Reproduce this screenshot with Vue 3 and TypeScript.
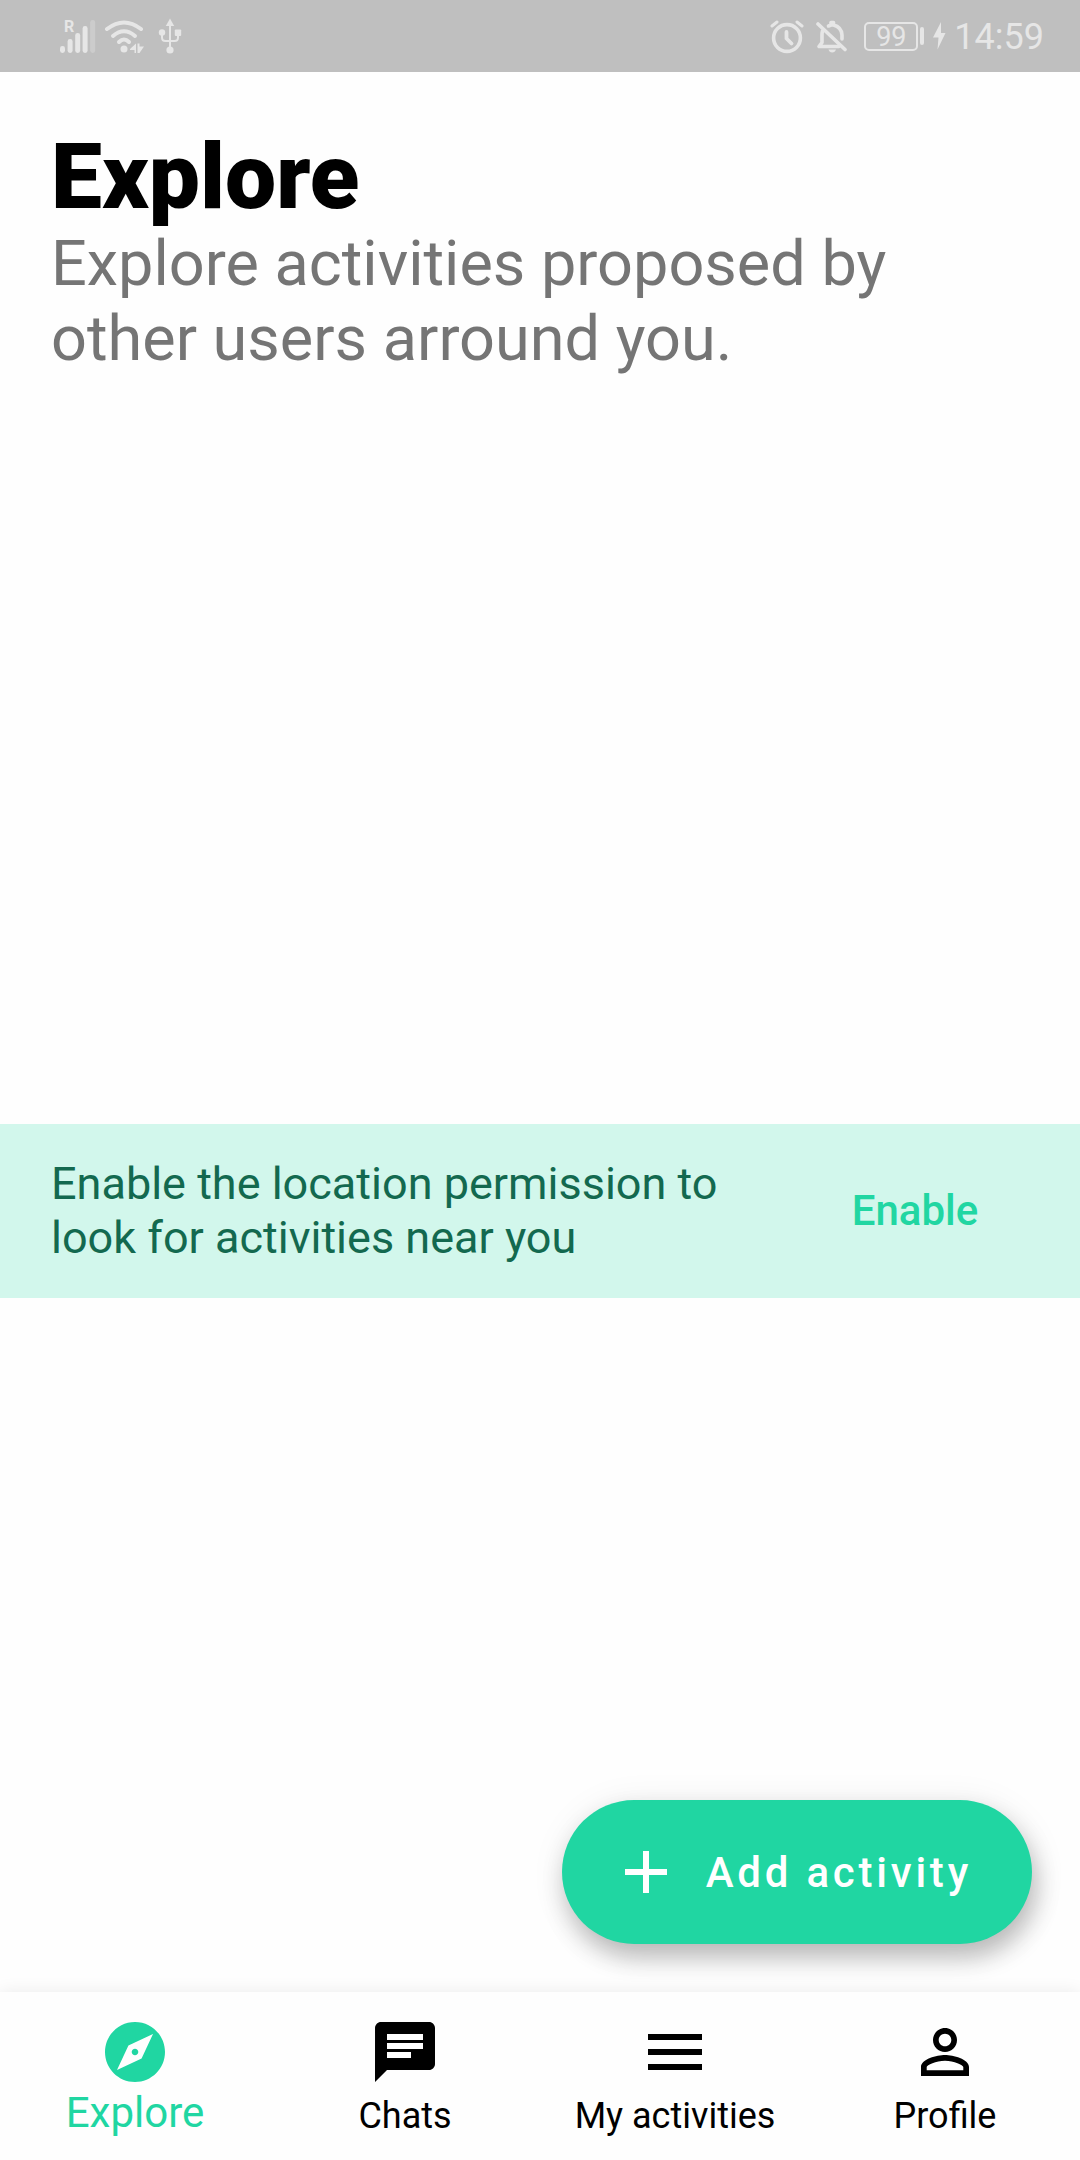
<script setup lang="ts">
import { ref } from 'vue'

interface Tab {
  id: string
  label: string
  path: string
}

const tabs: Tab[] = [
  {
    id: 'explore',
    label: 'Explore',
    path: 'M12 10.9c-.61 0-1.1.49-1.1 1.1s.49 1.1 1.1 1.1c.61 0 1.1-.49 1.1-1.1s-.49-1.1-1.1-1.1zM12 2C6.48 2 2 6.48 2 12s4.48 10 10 10 10-4.48 10-10S17.52 2 12 2zm2.19 12.19L6 18l3.81-8.19L18 6l-3.81 8.19z',
  },
  {
    id: 'chats',
    label: 'Chats',
    path: 'M20 2H4c-1.1 0-1.99.9-1.99 2L2 22l4-4h14c1.1 0 2-.9 2-2V4c0-1.1-.9-2-2-2zM6 9h12v2H6V9zm8 5H6v-2h8v2zm4-6H6V6h12v2z',
  },
  {
    id: 'activities',
    label: 'My activities',
    path: 'M3 18h18v-2H3v2zm0-5h18v-2H3v2zm0-7v2h18V6H3z',
  },
  {
    id: 'profile',
    label: 'Profile',
    path: 'M12 5.9c1.16 0 2.1.94 2.1 2.1s-.94 2.1-2.1 2.1S9.9 9.16 9.9 8s.94-2.1 2.1-2.1m0 9c2.97 0 6.1 1.46 6.1 2.1v1.1H5.9V17c0-.64 3.13-2.1 6.1-2.1M12 4C9.79 4 8 5.79 8 8s1.79 4 4 4 4-1.79 4-4-1.79-4-4-4zm0 9c-2.67 0-8 1.34-8 4v3h16v-3c0-2.66-5.33-4-8-4z',
  },
]

const active = ref('explore')
</script>

<template>
  <div class="screen">
    <div class="status">
      <div class="status-left">
        <svg class="signal" width="38" height="36" viewBox="0 0 38 36" aria-hidden="true">
          <text x="4" y="14" class="roaming">R</text>
          <rect x="0" y="28" width="5" height="7" rx="2.4" />
          <rect x="7.6" y="21" width="5" height="14" rx="2.4" />
          <rect x="15.2" y="15" width="5" height="20" rx="2.4" />
          <rect x="22.6" y="8" width="5" height="27" rx="2.4" />
          <rect x="30.2" y="2" width="5" height="33" rx="2.4" opacity=".35" />
        </svg>
        <svg width="42" height="36" viewBox="0 0 42 36" aria-hidden="true">
          <g fill="none" stroke="currentColor" stroke-width="4" stroke-linecap="round">
            <path d="M3 11Q20 -2 37 11" />
            <path d="M9 18Q20 8.500 31 18" />
            <path d="M15 24Q20 19 25 24" />
          </g>
          <circle cx="20" cy="31" r="3.500" />
          <path d="M26 31L32 25.500V35H30.500V32H26zM33.500 25.500H35.500V28.500H40L35.500 35H33.500z" />
        </svg>
        <svg class="usb" width="24" height="36" viewBox="0 0 24 36" aria-hidden="true">
          <path d="M12 .5L16.200 8H7.800z" />
          <path d="M12 7V31M4 14V19.500Q4 23 7.500 23H16.500Q20 23 20 19.500V14" fill="none" stroke="currentColor" stroke-width="2" />
          <circle cx="4" cy="14.500" r="3.200" />
          <rect x="16.800" y="11.500" width="6.400" height="6.400" rx="1" />
          <circle cx="12" cy="32" r="3.600" />
        </svg>
      </div>
      <div class="status-right">
        <svg width="34" height="36" viewBox="0 0 34 36" aria-hidden="true">
          <g fill="none" stroke="currentColor" stroke-linecap="round" stroke-linejoin="round">
            <circle cx="17" cy="20" r="13.400" stroke-width="3.600" />
            <path d="M16.500 14V20.500L21.500 25.500" stroke-width="3.800" />
            <path d="M2 8L7 4M27 4L32 8" stroke-width="3" />
          </g>
        </svg>
        <svg class="bell" width="32" height="36" viewBox="0 0 32 36" aria-hidden="true">
          <g fill="none" stroke="currentColor" stroke-width="3.600" stroke-linecap="round" stroke-linejoin="round">
            <path d="M6.500 13Q6 15 6 17V24.500L3 28.500H23" />
            <path d="M12.500 8L15 7V4.500H17.500V7Q25.500 9 26 17V21" />
            <path d="M2 6L29 31.500" />
          </g>
          <path d="M12.500 31.500H20Q19 34.500 16.200 34.500T12.500 31.500z" />
        </svg>
        <span class="battery">99</span>
        <span class="battery-tip"></span>
        <svg class="bolt" width="14" height="28" viewBox="0 0 14 28" aria-hidden="true">
          <path d="M9 0L1 15.500H6.500L5.500 27.500L13.500 11H9z" />
        </svg>
        <time>14:59</time>
      </div>
    </div>

    <header class="intro">
      <h1>Explore</h1>
      <p>Explore activities proposed by other users arround you.</p>
    </header>

    <main class="content">
      <section class="banner">
        <p>Enable the location permission to look for activities near you</p>
        <div class="banner-action">
          <button type="button" class="enable">Enable</button>
        </div>
      </section>
      <button type="button" class="fab">
        <svg width="72" height="72" viewBox="0 0 24 24" aria-hidden="true">
          <path d="M19 13h-6v6h-2v-6H5v-2h6V5h2v6h6v2z" />
        </svg>
        <span>Add activity</span>
      </button>
    </main>

    <nav class="tabs">
      <button
        v-for="tab in tabs"
        :key="tab.id"
        type="button"
        class="tab"
        :class="{ active: tab.id === active }"
        @click="active = tab.id"
      >
        <svg width="72" height="72" viewBox="0 0 24 24" aria-hidden="true">
          <path :d="tab.path" />
        </svg>
        <span>{{ tab.label }}</span>
      </button>
    </nav>
  </div>
</template>

<style>
body {
  margin: 0;
  background: #fefefe;
}
</style>

<style scoped>
.screen {
  display: flex;
  flex-direction: column;
  min-height: 100vh;
  background: #fefefe;
  color: #000;
  font-family: Roboto, sans-serif;
}

svg {
  display: block;
  flex: none;
  fill: currentColor;
}

h1,
p {
  margin: 0;
}

button {
  padding: 0;
  border: 0;
  background: none;
  color: inherit;
  font: inherit;
  cursor: pointer;
}

.status {
  display: flex;
  justify-content: space-between;
  align-items: center;
  height: 72px;
  padding: 0 36px 0 60px;
  background: #bfbfbf;
  color: #e6e6e6;
}

.status-left,
.status-right {
  display: flex;
  align-items: center;
}

.signal {
  margin-right: 6px;
}

.usb {
  margin-left: 12px;
}

.roaming {
  font-size: 16px;
  font-weight: 700;
}

.bell {
  margin: 0 16px 0 12px;
}

.battery {
  box-sizing: border-box;
  width: 54px;
  height: 29px;
  border: 2px solid currentColor;
  border-radius: 5px;
  font-size: 27px;
  line-height: 26px;
  text-align: center;
}

.battery-tip {
  width: 4px;
  height: 18px;
  margin: 0 8px 0 2px;
  border-radius: 2px;
  background: currentColor;
}

.bolt {
  margin-right: 8px;
}

time {
  font-size: 36px;
  line-height: 42px;
  padding-top: 2px;
}

.intro {
  padding: 56px 51px 53px;
}

h1 {
  font-size: 91px;
  font-weight: 900;
  line-height: 98px;
}

.intro p {
  color: #757575;
  font-size: 63px;
  line-height: 75px;
}

.content {
  position: relative;
  display: flex;
  flex: 1;
  flex-direction: column;
  justify-content: center;
}

.banner {
  display: flex;
  align-items: center;
  background: #d2f7ec;
}

.banner p {
  flex: 1;
  padding: 33px 0 33px 51px;
  color: #13694f;
  font-size: 45px;
  line-height: 54px;
}

.banner-action {
  box-sizing: border-box;
  flex: 0 0 30%;
  display: flex;
  justify-content: center;
  padding-right: 6px;
}

.enable {
  color: #21d6a2;
  font-size: 42px;
  font-weight: 500;
  line-height: 54px;
}

.fab {
  position: absolute;
  right: 48px;
  bottom: 48px;
  display: flex;
  align-items: center;
  gap: 24px;
  height: 144px;
  padding: 0 60px 0 48px;
  border-radius: 72px;
  background: #20d6a2;
  box-shadow: 4px 14px 24px rgba(0, 0, 0, 0.24), 2px 4px 36px rgba(0, 0, 0, 0.08);
  color: #fff;
  font-size: 42px;
  font-weight: 500;
  letter-spacing: 0.09em;
}

.tabs {
  position: relative;
  display: flex;
  height: 168px;
  background: #fefefe;
  box-shadow: 0 0 16px rgba(0, 0, 0, 0.08);
}

.tab {
  display: flex;
  flex: 1;
  flex-direction: column;
  align-items: center;
  padding-top: 24px;
  font-size: 36px;
  line-height: 56px;
}

.tab.active {
  color: #20d6a2;
  font-size: 42px;
  line-height: 50px;
}
</style>
